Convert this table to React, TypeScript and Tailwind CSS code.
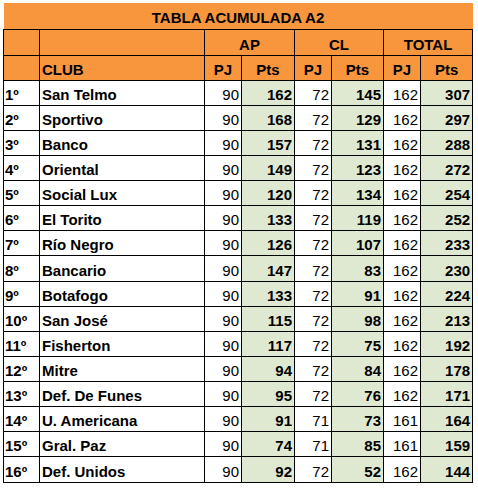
import React from "react";

type Row = [string, string, number, number, number, number, number, number];

const rows: Row[] = [
  ["1º", "San Telmo", 90, 162, 72, 145, 162, 307],
  ["2º", "Sportivo", 90, 168, 72, 129, 162, 297],
  ["3º", "Banco", 90, 157, 72, 131, 162, 288],
  ["4º", "Oriental", 90, 149, 72, 123, 162, 272],
  ["5º", "Social Lux", 90, 120, 72, 134, 162, 254],
  ["6º", "El Torito", 90, 133, 72, 119, 162, 252],
  ["7º", "Río Negro", 90, 126, 72, 107, 162, 233],
  ["8º", "Bancario", 90, 147, 72, 83, 162, 230],
  ["9º", "Botafogo", 90, 133, 72, 91, 162, 224],
  ["10º", "San José", 90, 115, 72, 98, 162, 213],
  ["11º", "Fisherton", 90, 117, 72, 75, 162, 192],
  ["12º", "Mitre", 90, 94, 72, 84, 162, 178],
  ["13º", "Def. De Funes", 90, 95, 72, 76, 162, 171],
  ["14º", "U. Americana", 90, 91, 71, 73, 161, 164],
  ["15º", "Gral. Paz", 90, 74, 71, 85, 161, 159],
  ["16º", "Def. Unidos", 90, 92, 72, 52, 162, 144],
];

const cell = "border border-black align-bottom leading-[17px] pb-[2px]";
const head = "border border-black bg-[#f7963d] font-bold text-center align-bottom leading-[17px] pb-[2px]";

export default function App() {
  return (
    <div className="bg-white w-[478px] h-[489px] pt-[3px] pl-[3px] text-[15px] text-black font-['Liberation_Sans',Arial,sans-serif]">
      <table className="table-fixed border-collapse w-[469px]">
        <colgroup>
          <col className="w-[36px]" />
          <col className="w-[165px]" />
          <col className="w-[37px]" />
          <col className="w-[53px]" />
          <col className="w-[37px]" />
          <col className="w-[52px]" />
          <col className="w-[37px]" />
          <col className="w-[52px]" />
        </colgroup>
        <thead>
          <tr className="h-[26px]">
            <th colSpan={8} className="bg-[#f7963d] font-bold text-center align-bottom leading-[17px] pb-[3px] border-b border-black">
              TABLA ACUMULADA A2
            </th>
          </tr>
          <tr className="h-[26px]">
            <th className={head}></th>
            <th className={head}></th>
            <th colSpan={2} className={head}>AP</th>
            <th colSpan={2} className={head}>CL</th>
            <th colSpan={2} className={head}>TOTAL</th>
          </tr>
          <tr className="h-[25px]">
            <th className={head}></th>
            <th className={`${head} !text-left pl-[2px]`}>CLUB</th>
            <th className={head}>PJ</th>
            <th className={head}>Pts</th>
            <th className={head}>PJ</th>
            <th className={head}>Pts</th>
            <th className={head}>PJ</th>
            <th className={head}>Pts</th>
          </tr>
        </thead>
        <tbody>
          {rows.map((r, i) => (
            <tr key={r[0]} className={i % 8 === 7 ? "h-[26px]" : "h-[25px]"}>
              <td className={`${cell} font-bold pl-[1px]`}>{r[0]}</td>
              <td className={`${cell} font-bold pl-[2px]`}>{r[1]}</td>
              <td className={`${cell} text-right pr-[2px]`}>{r[2]}</td>
              <td className={`${cell} bg-[#dfe9d1] font-bold text-right pr-[2px]`}>{r[3]}</td>
              <td className={`${cell} text-right pr-[2px]`}>{r[4]}</td>
              <td className={`${cell} bg-[#dfe9d1] font-bold text-right pr-[2px]`}>{r[5]}</td>
              <td className={`${cell} text-right pr-[2px]`}>{r[6]}</td>
              <td className={`${cell} bg-[#dfe9d1] font-bold text-right pr-[2px]`}>{r[7]}</td>
            </tr>
          ))}
        </tbody>
      </table>
    </div>
  );
}
